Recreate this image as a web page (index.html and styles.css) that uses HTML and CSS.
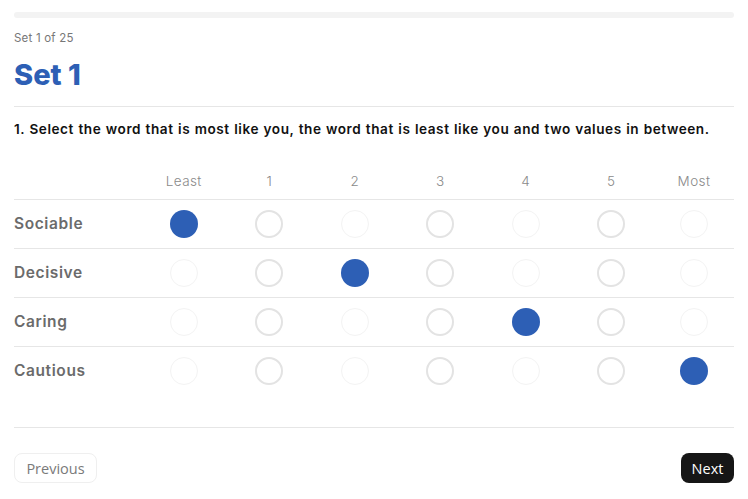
FILE: index.html
```html
<!DOCTYPE html>
<html lang="en">
<head>
<meta charset="utf-8">
<title>Set 1</title>
<link rel="stylesheet" href="styles.css">
</head>
<body>
<main class="page">
  <div class="progress"><div class="progress-fill"></div></div>
  <p class="counter">Set 1 of 25</p>
  <h1 class="title">Set 1</h1>
  <p class="question">1. Select the word that is most like you, the word that is least like you and two values in between.</p>

  <div class="scale">
    <div class="row head">
      <span class="label"></span>
      <span class="col">Least</span>
      <span class="col">1</span>
      <span class="col">2</span>
      <span class="col">3</span>
      <span class="col">4</span>
      <span class="col">5</span>
      <span class="col">Most</span>
    </div>
    <div class="row">
      <span class="label">Sociable</span>
      <span class="col"><span class="dot on"></span></span>
      <span class="col"><span class="dot"></span></span>
      <span class="col"><span class="dot faint"></span></span>
      <span class="col"><span class="dot"></span></span>
      <span class="col"><span class="dot faint"></span></span>
      <span class="col"><span class="dot"></span></span>
      <span class="col"><span class="dot faint"></span></span>
    </div>
    <div class="row">
      <span class="label">Decisive</span>
      <span class="col"><span class="dot faint"></span></span>
      <span class="col"><span class="dot"></span></span>
      <span class="col"><span class="dot on"></span></span>
      <span class="col"><span class="dot"></span></span>
      <span class="col"><span class="dot faint"></span></span>
      <span class="col"><span class="dot"></span></span>
      <span class="col"><span class="dot faint"></span></span>
    </div>
    <div class="row">
      <span class="label">Caring</span>
      <span class="col"><span class="dot faint"></span></span>
      <span class="col"><span class="dot"></span></span>
      <span class="col"><span class="dot faint"></span></span>
      <span class="col"><span class="dot"></span></span>
      <span class="col"><span class="dot on"></span></span>
      <span class="col"><span class="dot"></span></span>
      <span class="col"><span class="dot faint"></span></span>
    </div>
    <div class="row last">
      <span class="label">Cautious</span>
      <span class="col"><span class="dot faint"></span></span>
      <span class="col"><span class="dot"></span></span>
      <span class="col"><span class="dot faint"></span></span>
      <span class="col"><span class="dot"></span></span>
      <span class="col"><span class="dot faint"></span></span>
      <span class="col"><span class="dot"></span></span>
      <span class="col"><span class="dot on"></span></span>
    </div>
  </div>

  <div class="footer">
    <button class="btn prev" type="button">Previous</button>
    <button class="btn next" type="button">Next</button>
  </div>
</main>
</body>
</html>
```

FILE: styles.css
```css
* { box-sizing: border-box; }

html, body {
  margin: 0;
  background: #ffffff;
}

body {
  font-family: Inter, "Noto Sans", "DejaVu Sans", sans-serif;
  color: #111111;
}

.page {
  padding: 12px 14px 0;
  width: 748px;
}

.progress {
  height: 6px;
  border-radius: 3px;
  background: #f3f3f3;
}

.progress-fill {
  width: 0;
  height: 100%;
}

.counter {
  margin: 12px 0 0;
  font-size: 11.5px;
  line-height: 16px;
  letter-spacing: 0.2px;
  color: #777777;
}

.title {
  margin: 12px 0 0;
  font-size: 29px;
  line-height: 34px;
  font-weight: 800;
  color: #2d5fb5;
  padding-bottom: 14px;
  border-bottom: 1px solid #e6e6e6;
}

.question {
  margin: 13px 0 0;
  font-size: 13.6px;
  line-height: 18px;
  font-weight: 600;
  letter-spacing: 0.56px;
  word-spacing: 0.5px;
  color: #111111;
  white-space: nowrap;
}

.scale {
  margin-top: 25px;
}

.row {
  display: grid;
  grid-template-columns: 127px repeat(6, 85.5px) 1fr;
  align-items: center;
  height: 49px;
  border-bottom: 1px solid #e6e6e6;
}

.row.head {
  height: 37px;
  font-size: 13.5px;
  font-weight: 300;
  letter-spacing: 0.4px;
  color: #8a8a8a;
}

.row.last {
  border-bottom: none;
  height: 48px;
}

.label {
  font-size: 15.5px;
  line-height: 18px;
  font-weight: 600;
  letter-spacing: 0.6px;
  color: #6b6b6b;
  padding-bottom: 1px;
}

.col {
  display: flex;
  justify-content: center;
  text-align: center;
}

.dot {
  width: 28px;
  height: 28px;
  border-radius: 50%;
  border: 2px solid #e3e3e3;
}

.dot.faint {
  border: 1.5px solid #f3f3f3;
}

.dot.on {
  border: none;
  background: #2d5fb5;
}

.footer {
  margin-top: 32px;
  border-top: 1px solid #e6e6e6;
  padding-top: 25px;
  display: flex;
  justify-content: space-between;
  align-items: center;
}

.btn {
  font-family: "Open Sans", "Noto Sans", sans-serif;
  font-size: 14.5px;
  height: 30px;
  border-radius: 8px;
  cursor: pointer;
}

.btn.prev {
  padding: 0;
  width: 83px;
  background: #ffffff;
  border: 1px solid #efefef;
  color: #7a7a7a;
}

.btn.next {
  width: 53px;
  padding: 0;
  background: #161616;
  border: none;
  color: #ffffff;
}
```
